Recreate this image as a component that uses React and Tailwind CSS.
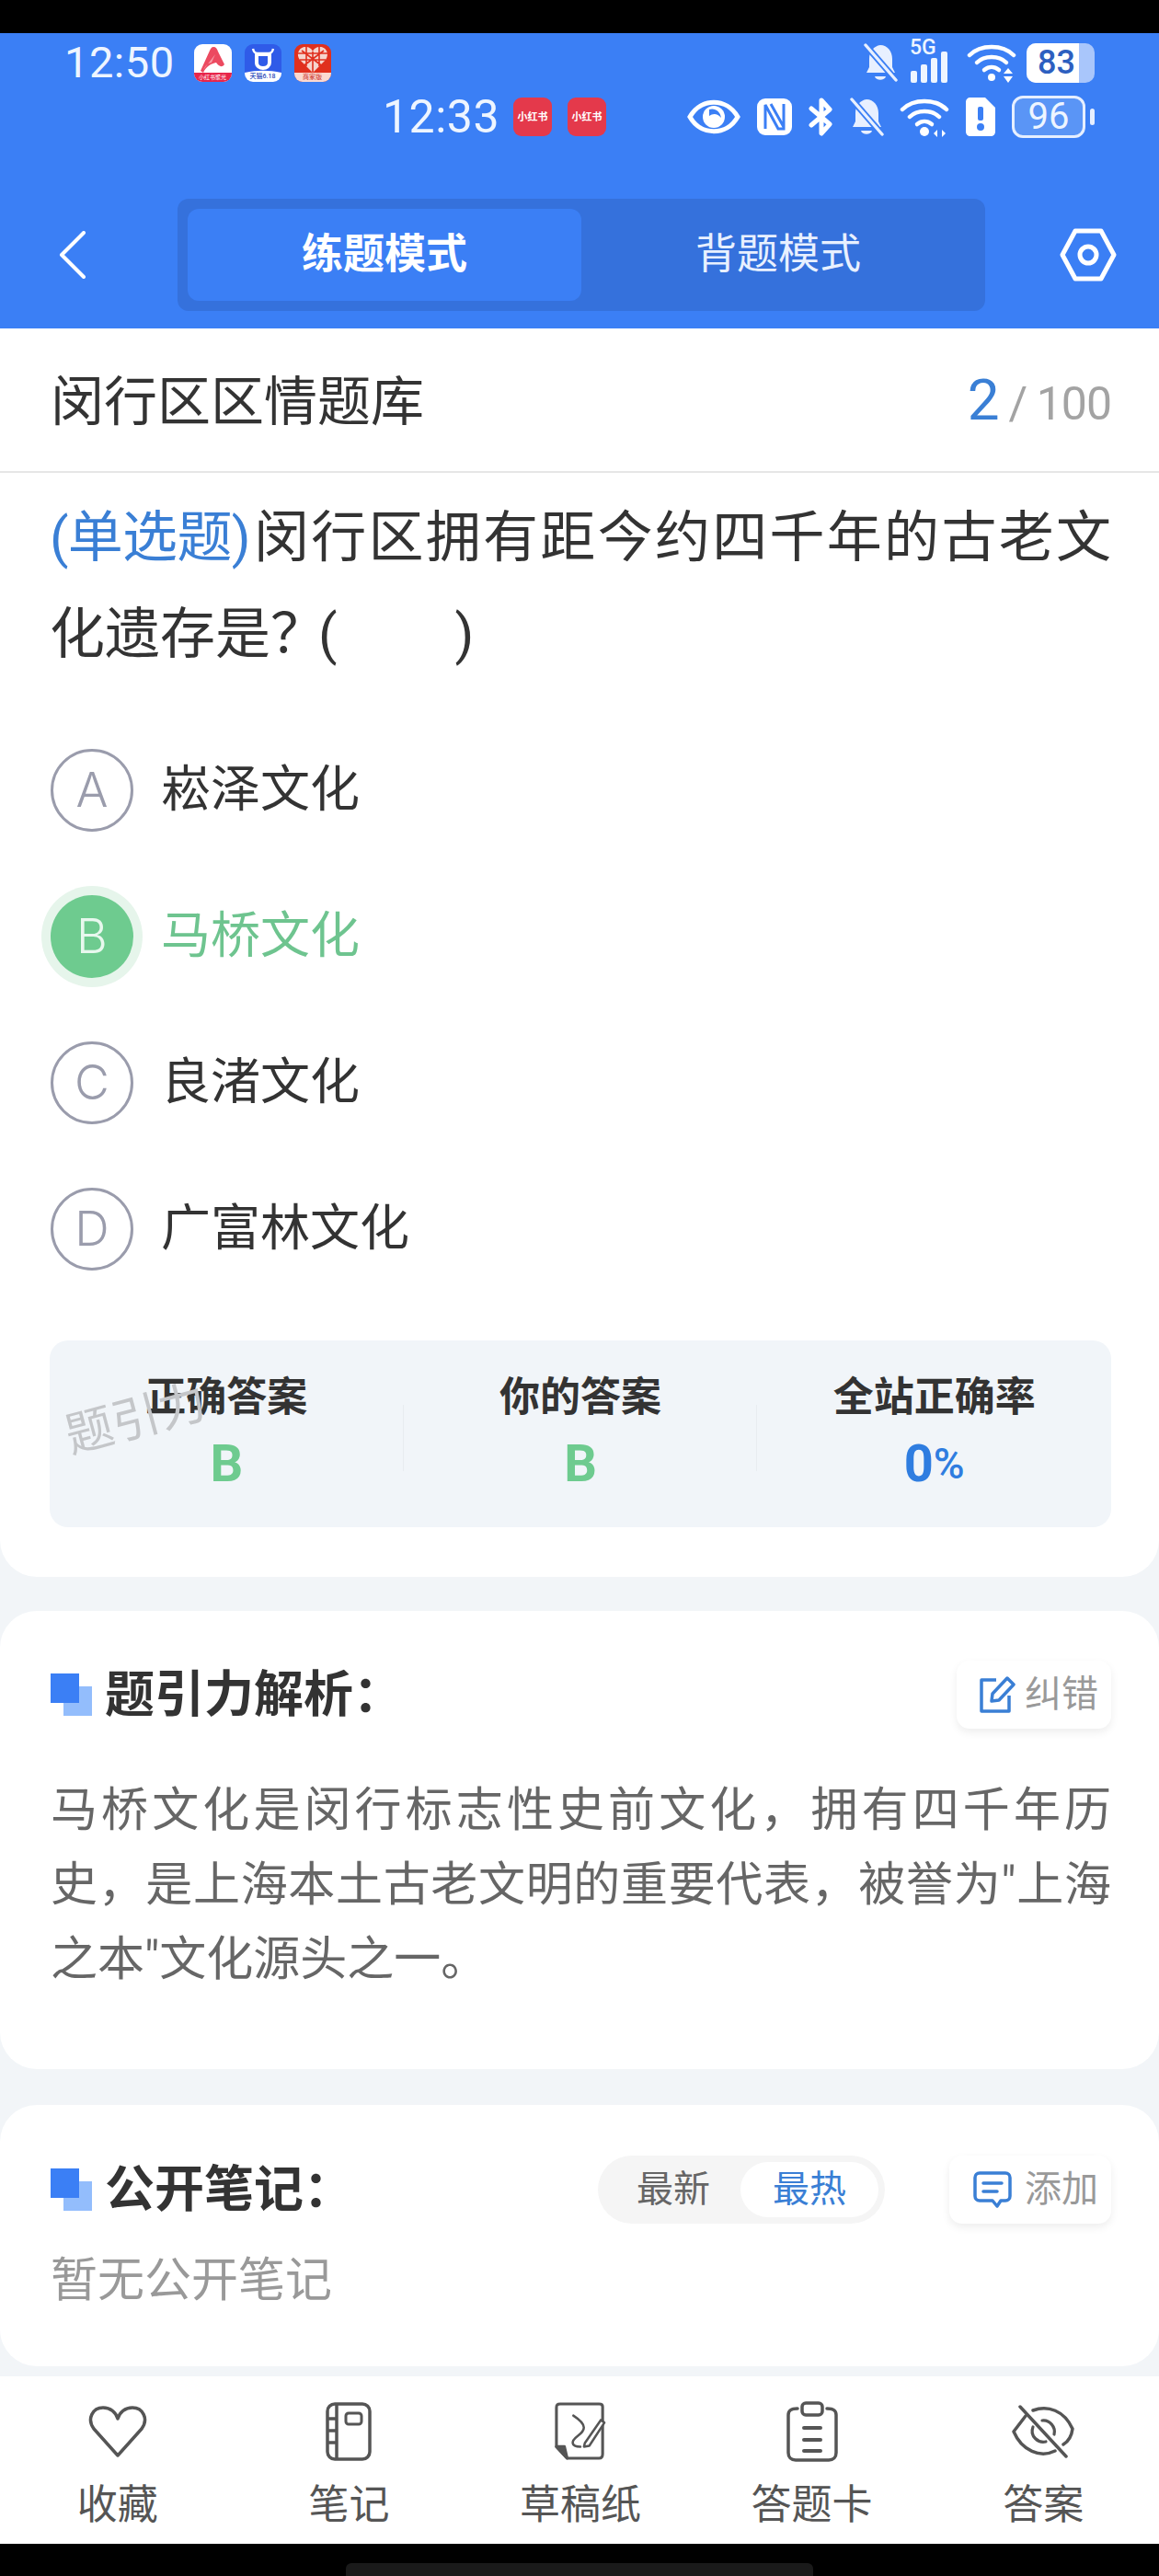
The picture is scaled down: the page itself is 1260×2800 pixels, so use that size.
const CJK = "font-['Roboto','Noto_Sans_CJK_SC',sans-serif]";

function MutedBell({ className }) {
  return (
    <svg viewBox="0 0 38 44" className={className}>
      <path d="M4 33 L7 27 V18 C7 10 12 4 19 3 C27 3 32 10 32 18 V27 L35 33 Z" fill="#e8f0ff" />
      <path d="M13 37 H25 C24 42 14 42 13 37 Z" fill="#e8f0ff" />
      <path d="M3 3 L36 41" stroke="#3b7ff5" strokeWidth="7" />
      <path d="M3 3 L36 41" stroke="#e8f0ff" strokeWidth="3.4" strokeLinecap="round" />
    </svg>
  );
}

function Wifi({ className, row2 }) {
  return (
    <svg viewBox="0 0 54 44" className={className} fill="none" stroke="#fff" strokeLinecap="round">
      <path d="M3 14 C15 2 39 2 51 14" strokeWidth="4.5" />
      <path d="M11 22 C19 14 35 14 43 22" strokeWidth="4.5" />
      <path d="M19 30 C24 26 30 26 35 30" strokeWidth="4.5" />
      <circle cx="27" cy="38" r={row2 ? 5 : 4} fill="#fff" stroke="none" />
      {row2 ? (
        <path d="M41 36 L37 40 L41 44 Z M46 36 L50 40 L46 44 Z" fill="#fff" stroke="none" />
      ) : (
        <path d="M45 28 L50 34 H40 Z M45 44 L50 37 H40 Z" fill="#fff" stroke="none" />
      )}
    </svg>
  );
}

function Back() {
  return (
    <svg viewBox="0 0 30 52" className="w-[30px] h-[52px]" fill="none" stroke="#fff" strokeWidth="4" strokeLinecap="round" strokeLinejoin="round">
      <path d="M27 2 L3 26 L27 50" />
    </svg>
  );
}

function Hex() {
  return (
    <svg viewBox="0 0 62 58" className="w-[62px] h-[58px]" fill="none" stroke="#fff" strokeWidth="5" strokeLinejoin="round">
      <path d="M17 3 H45 L59 29 L45 55 H17 L3 29 Z" />
      <circle cx="31" cy="29" r="9" />
    </svg>
  );
}

function AppIcons() {
  return (
    <div className="flex gap-[14px] ml-[21px]">
      <div className="relative w-[41px] h-[41px] rounded-[9px] bg-white overflow-hidden">
        <svg viewBox="0 0 41 41" className="w-[41px] h-[41px]">
          <path d="M21 3 C24 3 25 5 26 8 L33 22 C30 26 27 24 24 20 C19 21 13 24 10 31 L7 29 L17 7 C18 5 19 3 21 3 Z" fill="#ec4a60" />
          <path d="M23 11 L19 20 C14 21 12 24 10 28 Z" fill="#f79aa6" />
          <rect x="0" y="31" width="41" height="10" fill="#e8264a" />
        </svg>
        <span className="absolute left-0 right-0 bottom-[1px] text-center text-[6px] leading-[8px] text-white">小红书聚光</span>
      </div>
      <div className="relative w-[40px] h-[41px] rounded-[9px] bg-[#2f5be8] overflow-hidden">
        <svg viewBox="0 0 40 41" className="w-[40px] h-[41px]">
          <path d="M9 5 C10 9 11 10 14 10 H26 C29 10 30 9 31 5" stroke="#fff" strokeWidth="2.5" fill="none" />
          <path d="M13 11 H27 V20 C27 28 13 28 13 20 Z" fill="none" stroke="#fff" strokeWidth="4" />
          <path d="M0 31 C14 28 26 28 40 31 V41 H0 Z" fill="#fff" />
        </svg>
        <span className="absolute left-0 right-0 bottom-[1px] text-center text-[7px] leading-[9px] font-medium text-[#2748b8]">天猫6.18</span>
      </div>
      <div className="relative w-[40px] h-[41px] rounded-[9px] bg-[#e0301e] overflow-hidden">
        <svg viewBox="0 0 40 41" className="w-[40px] h-[41px]">
          <path d="M20 31 L6 17 C1 10 6 3 12 3 C16 3 19 5 20 8 C21 5 24 3 28 3 C34 3 39 10 34 17 Z" fill="#f6d5cd" />
          <path d="M13 3 V24 M27 3 V24 M4 10 H36 M6 17 H34 M20 8 V31 M8 7 L32 25 M32 7 L8 25" stroke="#e0301e" strokeWidth="1.6" />
          <rect x="0" y="31" width="40" height="10" fill="#fbd9d0" />
        </svg>
        <span className="absolute left-0 right-0 bottom-[1px] text-center text-[7px] leading-[8px] text-[#c8281a]">商家版</span>
      </div>
    </div>
  );
}

function RedNote() {
  return (
    <div className="w-[42px] h-[42px] rounded-[9px] bg-[#e4394b] flex items-center justify-center text-white text-[11px] leading-none font-bold whitespace-nowrap">
      小红书
    </div>
  );
}

function StatusBar() {
  return (
    <>
      <div className="flex items-center h-[48px] mt-[8px] pl-[70px] pr-[70px]">
        <span className="text-[47px] leading-[48px] text-[#eef5ff] font-['Roboto',sans-serif] tracking-[0.5px]">12:50</span>
        <AppIcons />
        <div className="flex-1" />
        <MutedBell className="w-[38px] h-[44px]" />
        <div className="relative w-[50px] h-[44px] ml-[13px]">
          <span className="absolute left-0 top-[-6px] text-[23px] leading-[24px] font-medium text-[#eef5ff] font-['Roboto',sans-serif]">5G</span>
          <div className="absolute left-[1px] bottom-0 flex items-end gap-[4px]">
            <div className="w-[7px] h-[13px] rounded-[2px] bg-[#eef5ff]" />
            <div className="w-[7px] h-[20px] rounded-[2px] bg-[#eef5ff]" />
            <div className="w-[7px] h-[27px] rounded-[2px] bg-[#eef5ff]" />
            <div className="w-[7px] h-[34px] rounded-[2px] bg-[#eef5ff]" />
          </div>
        </div>
        <Wifi className="w-[54px] h-[44px] ml-[12px]" />
        <div className="relative flex items-center w-[74px] h-[43px] ml-[11px] rounded-[10px] bg-[#a9c6fb] overflow-hidden">
          <div className="w-[57px] h-[43px] bg-white flex items-center justify-center pl-[8px] text-[36px] leading-none font-medium text-[#2d5fc0] font-['Roboto',sans-serif]">83</div>
        </div>
      </div>
      <div className="flex items-center h-[46px] mt-[12px] pl-[416px] pr-[80px]">
        <span className="text-[50px] leading-[46px] text-[#eef5ff] font-['Roboto',sans-serif] tracking-[0.5px]">12:33</span>
        <div className="flex gap-[17px] ml-[15px]">
          <RedNote />
          <RedNote />
        </div>
        <div className="flex-1" />
        <svg viewBox="0 0 58 40" className="w-[58px] h-[40px]">
          <path d="M3 20 C15 -1 43 -1 55 20 C43 41 15 41 3 20 Z" fill="none" stroke="#fff" strokeWidth="5" />
          <circle cx="29" cy="20" r="12" fill="#fff" />
          <path d="M24 12 C30 10 36 14 37 21 C33 16 28 16 24 19 Z" fill="#3b7ff5" />
        </svg>
        <svg viewBox="0 0 40 44" className="w-[40px] h-[44px] ml-[17px]">
          <rect x="1" y="2" width="38" height="40" rx="9" fill="#fff" />
          <path d="M10 35 V9 L24 35 H30 V8 M16 8 L30 33" fill="none" stroke="#3b7ff5" strokeWidth="3" />
        </svg>
        <svg viewBox="0 0 28 44" className="w-[28px] h-[44px] ml-[17px]" fill="none" stroke="#fff" strokeWidth="5" strokeLinecap="round" strokeLinejoin="round">
          <path d="M3 13 L23 30 L14 40 V4 L23 14 L3 31" />
        </svg>
        <MutedBell className="w-[38px] h-[44px] ml-[16px]" />
        <Wifi row2 className="w-[54px] h-[44px] ml-[17px]" />
        <svg viewBox="0 0 34 44" className="w-[34px] h-[44px] ml-[17px]">
          <path d="M6 1 H22 L33 12 V38 C33 41 31 43 28 43 H6 C3 43 1 41 1 38 V6 C1 3 3 1 6 1 Z" fill="#fff" />
          <rect x="14" y="11" width="6" height="15" rx="2" fill="#3b7ff5" />
          <circle cx="17" cy="33" r="4" fill="#3b7ff5" />
        </svg>
        <div className="relative flex items-center justify-center w-[80px] h-[46px] ml-[17px] rounded-[12px] border-[3px] border-[#e6efff] bg-[#5a95f6] text-[40px] leading-none text-[#eef5ff] font-['Roboto',sans-serif]">
          96
          <div className="absolute left-[82px] top-[11px] w-[5px] h-[18px] rounded-[3px] bg-[#e6efff]" />
        </div>
      </div>
    </>
  );
}

function TabsRow() {
  return (
    <div className="flex items-center h-[122px] mt-[66px] pl-[64px] pr-[46px]">
      <Back />
      <div className="flex items-center w-[878px] h-[122px] ml-[99px] p-[11px] rounded-[12px] bg-[#3571dc]">
        <div className="flex items-center justify-center w-[428px] h-[100px] rounded-[12px] bg-[#3b7ff5] text-[45px] font-bold text-white">练题模式</div>
        <div className="flex items-center justify-center flex-1 h-[100px] text-[45px] text-[#e8f0ff]">背题模式</div>
      </div>
      <div className="flex-1" />
      <Hex />
    </div>
  );
}

function Option({ letter, text, active }) {
  return (
    <div className="flex items-center h-[159px] pl-[55px]">
      {active ? (
        <div className="flex items-center justify-center w-[90px] h-[90px] rounded-full bg-[#6ecb8f] text-[#e8f8ee] text-[52px] font-['Inter',sans-serif] font-light shadow-[0_0_0_10px_#e6f5eb]">{letter}</div>
      ) : (
        <div className="flex items-center justify-center w-[90px] h-[90px] rounded-full border-[3px] border-[#9a9cac] text-[#9a9cac] text-[52px] font-['Inter',sans-serif] font-light">{letter}</div>
      )}
      <span className={`ml-[30px] text-[54px] ${active ? "text-[#6ec48f]" : "text-[#333333]"}`}>{text}</span>
    </div>
  );
}

function Stat({ label, children, divider }) {
  return (
    <div className="relative flex-1 flex flex-col items-center pt-[36px]">
      <div className="text-[44px] leading-[52px] font-bold text-[#333333]">{label}</div>
      <div className="mt-[16px] h-[60px] flex items-end justify-center leading-[60px]">{children}</div>
      {divider && <div className="absolute right-0 top-[70px] w-[1px] h-[72px] bg-[#e8ecf0]" />}
    </div>
  );
}

function Squares() {
  return (
    <div className="relative w-[45px] h-[46px] shrink-0">
      <div className="absolute left-[14px] top-[14px] w-[31px] h-[32px] bg-[#93bdfc]" />
      <div className="absolute left-0 top-0 w-[31px] h-[32px] bg-[#3b7ff5]" />
    </div>
  );
}

function EditIcon() {
  return (
    <svg viewBox="0 0 40 42" className="w-[40px] h-[42px]" fill="none" stroke="#3a7fd5" strokeWidth="3.5" strokeLinejoin="round">
      <path d="M19 5 H3 V39 H33 V22" />
      <path d="M14 28 L15 20 L31 3 L38 10 L22 27 Z" />
    </svg>
  );
}

function ChatIcon() {
  return (
    <svg viewBox="0 0 42 42" className="w-[42px] h-[42px]" fill="none" stroke="#3a7fd5" strokeWidth="3.5" strokeLinejoin="round" strokeLinecap="round">
      <path d="M7 3 H35 C38 3 40 5 40 8 V28 C40 31 38 33 35 33 H30 L26 39 L21 33 H7 C4 33 2 31 2 28 V8 C2 5 4 3 7 3 Z" />
      <path d="M11 14 H31 M11 23 H26" />
    </svg>
  );
}

function SideBtn({ icon, label, w }) {
  return (
    <div className={`flex items-center h-[74px] ${w} rounded-[14px] bg-white shadow-[0_4px_10px_rgba(0,0,0,0.07)]`}>
      {icon}
      <span className="text-[40px] text-[#999999]">{label}</span>
    </div>
  );
}

function Heart() {
  return (
    <svg viewBox="0 0 66 58" className="w-[66px] h-[58px]" fill="none" stroke="#555555" strokeWidth="3.5" strokeLinejoin="round">
      <path d="M33 55 L7 26 C-1 15 6 3 17 3 C25 3 31 8 33 15 C35 8 41 3 49 3 C60 3 67 15 59 26 Z" />
    </svg>
  );
}

function NoteBook() {
  return (
    <svg viewBox="0 0 50 64" className="w-[50px] h-[64px]" fill="none" stroke="#555555" strokeWidth="3.5" strokeLinejoin="round">
      <rect x="2" y="2" width="46" height="60" rx="8" />
      <path d="M12 2 V62" />
      <path d="M2 18 H12 M2 31 H12 M2 44 H12" />
      <rect x="22" y="12" width="17" height="12" rx="3" strokeWidth="3" />
    </svg>
  );
}

function Draft() {
  return (
    <svg viewBox="0 0 58 66" className="w-[56px] h-[66px]" fill="none" stroke="#555555" strokeWidth="3.2" strokeLinejoin="round" strokeLinecap="round">
      <path d="M14 63 H50 C53 63 54 61 54 58 V5 C54 3 53 2 50 2 H6 C3 2 2 3 2 6 V50 Z" />
      <path d="M2 50 H11 L14 63 Z" fill="#555555" />
      <path d="M21 15 C38 26 34 32 26 38 C18 44 18 50 29 50" strokeWidth="2.6" />
      <path d="M34 46 L52 20 L56 23 L39 49 L33 50 Z" fill="#fff" strokeWidth="2.6" />
    </svg>
  );
}

function CardIcon() {
  return (
    <svg viewBox="0 0 56 66" className="w-[56px] h-[66px]" fill="none" stroke="#555555" strokeWidth="3.5" strokeLinejoin="round" strokeLinecap="round">
      <path d="M12 8 C5 8 2 10 2 15 V56 C2 61 5 64 10 64 H46 C51 64 54 61 54 56 V15 C54 10 51 8 44 8" />
      <rect x="17" y="2" width="22" height="13" rx="4" />
      <path d="M19 29 H37 M19 42 H37 M19 54 H37" strokeWidth="4" />
    </svg>
  );
}

function EyeOff() {
  return (
    <svg viewBox="0 0 70 58" className="w-[70px] h-[58px]" fill="none" stroke="#555555" strokeWidth="3.5" strokeLinejoin="round" strokeLinecap="round">
      <path d="M16 12 L3 29 C12 50 32 58 48 50" />
      <path d="M24 6 C40 0 58 6 67 26 C66 34 62 40 57 43" />
      <path d="M34 17 C42 16 49 24 47 32" strokeWidth="3.2" />
      <path d="M24 24 C20 34 30 42 38 40" strokeWidth="3.2" />
      <path d="M10 2 L60 56" />
    </svg>
  );
}

function NavItem({ icon, label }) {
  return (
    <div className="flex-1 flex flex-col items-center pt-[25px]">
      <div className="flex items-center justify-center h-[70px]">{icon}</div>
      <div className="mt-[15px] text-[44px] leading-[60px] text-[#555555]">{label}</div>
    </div>
  );
}

export default function App() {
  return (
    <div className={`flex flex-col w-[1260px] h-[2800px] overflow-hidden bg-[#f2f5f8] ${CJK}`}>
      <div className="h-[36px] bg-black shrink-0" />
      <div className="h-[321px] shrink-0 bg-[#3b7ff5] flex flex-col">
        <StatusBar />
        <TabsRow />
      </div>

      <div className="flex items-center justify-between h-[157px] shrink-0 pt-[6px] pl-[55px] pr-[52px] bg-white border-b-2 border-[#e6e6e6]">
        <span className="text-[58px] text-[#333333]">闵行区区情题库</span>
        <span className="flex items-baseline -mt-[6px]">
          <span className="text-[62px] text-[#3a7fd5]">2</span>
          <span className="ml-[10px] text-[50px] tracking-[-0.5px] text-[#a3a3a3]">/</span>
          <span className="ml-[10px] text-[50px] tracking-[-1px] text-[#a3a3a3]">100</span>
        </span>
      </div>

      <div className="shrink-0 bg-white rounded-b-[40px] pt-[18px] pb-[54px]">
        <div className="pl-[54px] pr-[52px] text-[60px] leading-[105px] text-justify text-[#333333]">
          <span className="text-[#3a7fd5] tracking-[-3px]">(单选题)</span>
          <span className="ml-[4px]">闵行区拥有距今约四千年的古老文化遗存是？</span>
          <span className="ml-[-8px] mr-[8px]">(</span>　　)
        </div>
        <div className="mt-[37px]">
          <Option letter="A" text="崧泽文化" />
          <Option letter="B" text="马桥文化" active />
          <Option letter="C" text="良渚文化" />
          <Option letter="D" text="广富林文化" />
        </div>
        <div className="relative flex mt-[42px] ml-[54px] mr-[52px] h-[203px] rounded-[20px] bg-[#f1f5f9]">
          <Stat label="正确答案" divider><span className="text-[56px] font-bold text-[#6ecb8f]">B</span></Stat>
          <Stat label="你的答案" divider><span className="text-[56px] font-bold text-[#6ecb8f]">B</span></Stat>
          <Stat label="全站正确率">
            <span className="text-[56px] font-bold text-[#2f7de0]">0</span>
            <span className="text-[46px] font-medium text-[#2f7de0]">%</span>
          </Stat>
          <div className="absolute left-[16px] top-[56px] -rotate-[15deg] text-[52px] leading-[60px] text-[#c4c6c9]">题引力</div>
        </div>
      </div>

      <div className="shrink-0 mt-[37px] h-[498px] bg-white rounded-[40px] pt-[54px] pl-[55px] pr-[50px]">
        <div className="flex items-center justify-between h-[74px]">
          <div className="flex items-center gap-[14px]">
            <Squares />
            <span className="text-[54px] font-bold text-[#333333]">题引力解析：</span>
          </div>
          <div className="mr-[2px]">
            <SideBtn icon={<div className="ml-[24px] mr-[10px]"><EditIcon /></div>} label="纠错" w="w-[168px]" />
          </div>
        </div>
        <div className="mt-[48px] pr-[2px] text-[51px] leading-[81px] text-justify text-[#666666]">
          马桥文化是闵行标志性史前文化，拥有四千年历史，是上海本土古老文明的重要代表，被誉为"上海之本"文化源头之一。
        </div>
      </div>

      <div className="shrink-0 mt-[39px] h-[284px] bg-white rounded-[40px] pt-[56px] pl-[55px] pr-[52px]">
        <div className="flex items-center h-[72px]">
          <Squares />
          <span className="ml-[14px] text-[54px] font-bold text-[#333333]">公开笔记：</span>
          <div className="flex-1" />
          <div className="flex items-center w-[312px] h-[74px] rounded-full bg-[#f5f5f5] p-[7px] pl-[42px]">
            <span className="text-[40px] text-[#666666]">最新</span>
            <div className="flex-1" />
            <div className="flex items-center justify-center w-[150px] h-[60px] rounded-full bg-white text-[40px] text-[#3a7fd5]">最热</div>
          </div>
          <div className="ml-[70px]">
            <SideBtn icon={<div className="ml-[26px] mr-[14px]"><ChatIcon /></div>} label="添加" w="w-[176px]" />
          </div>
        </div>
        <div className="mt-[28px] text-[51px] leading-[70px] text-[#999999]">暂无公开笔记</div>
      </div>

      <div className="shrink-0 mt-[11px] h-[182px] bg-white flex pl-[2px]">
        <NavItem icon={<Heart />} label="收藏" />
        <NavItem icon={<NoteBook />} label="笔记" />
        <NavItem icon={<Draft />} label="草稿纸" />
        <NavItem icon={<CardIcon />} label="答题卡" />
        <NavItem icon={<EyeOff />} label="答案" />
      </div>

      <div className="flex-1 bg-black flex items-end justify-center">
        <div className="w-[508px] h-[14px] rounded-t-[6px] bg-[#1a1a1a]" />
      </div>
    </div>
  );
}
